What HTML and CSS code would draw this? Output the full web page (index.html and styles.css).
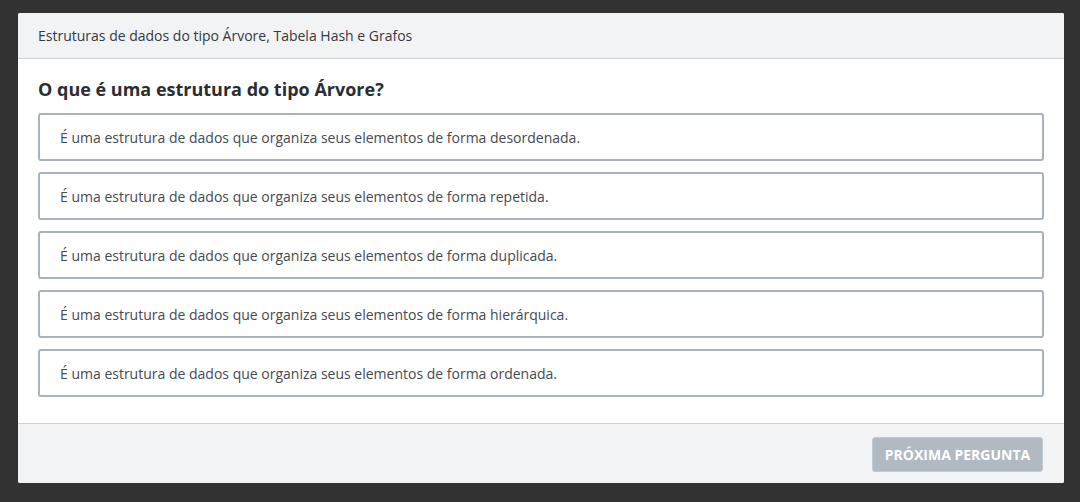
FILE: index.html
```html
<!DOCTYPE html>
<html lang="pt">
<head>
<meta charset="utf-8">
<link rel="stylesheet" href="styles.css">
</head>
<body>
<div class="card">
  <div class="card-header">Estruturas de dados do tipo Árvore, Tabela Hash e Grafos</div>
  <div class="card-body">
    <h2 class="question">O que é uma estrutura do tipo Árvore?</h2>
    <div class="options">
      <div class="option">É uma estrutura de dados que organiza seus elementos de forma desordenada.</div>
      <div class="option">É uma estrutura de dados que organiza seus elementos de forma repetida.</div>
      <div class="option">É uma estrutura de dados que organiza seus elementos de forma duplicada.</div>
      <div class="option">É uma estrutura de dados que organiza seus elementos de forma hierárquica.</div>
      <div class="option">É uma estrutura de dados que organiza seus elementos de forma ordenada.</div>
    </div>
  </div>
  <div class="card-footer">
    <button class="next-btn" disabled>Próxima pergunta</button>
  </div>
</div>
</body>
</html>
```
FILE: styles.css
```css
html, body {
  margin: 0;
  height: 100%;
}
body {
  background: #323232;
  font-family: "Open Sans", "Noto Sans", sans-serif;
  padding: 13px 16px 0 18px;
  box-sizing: border-box;
}
.card {
  background: #ffffff;
  border-radius: 2px;
  overflow: hidden;
  width: 1046px;
}
.card-header {
  background: #f2f3f5;
  height: 45px;
  border-bottom: 1px solid #cdd0d5;
  display: flex;
  align-items: center;
  padding: 0 20px;
  font-size: 14px;
  color: #333a40;
}
.card-body {
  padding: 18px 20px 26px 20px;
}
.question {
  margin: 0 0 12px 0;
  font-size: 18px;
  line-height: 24px;
  font-weight: 700;
  color: #2a2e33;
}
.options {
  display: flex;
  flex-direction: column;
  gap: 11px;
}
.option {
  height: 48px;
  box-sizing: border-box;
  border: 2px solid #aab3bb;
  border-radius: 3px;
  display: flex;
  align-items: center;
  padding: 0 20px;
  font-size: 14px;
  color: #454a50;
}
.card-footer {
  background: #f2f3f5;
  border-top: 1px solid #cdd0d5;
  height: 60px;
  display: flex;
  justify-content: flex-end;
  align-items: flex-start;
  padding: 13px 21px 0 0;
  box-sizing: border-box;
}
.next-btn {
  width: 171px;
  height: 35px;
  border: 1px solid #c2c9cf;
  border-radius: 3px;
  background: #b1bac2;
  color: #ffffff;
  font-family: "Open Sans", "Noto Sans", sans-serif;
  font-weight: 700;
  font-size: 14px;
  text-transform: uppercase;
  padding: 0;
}
```
